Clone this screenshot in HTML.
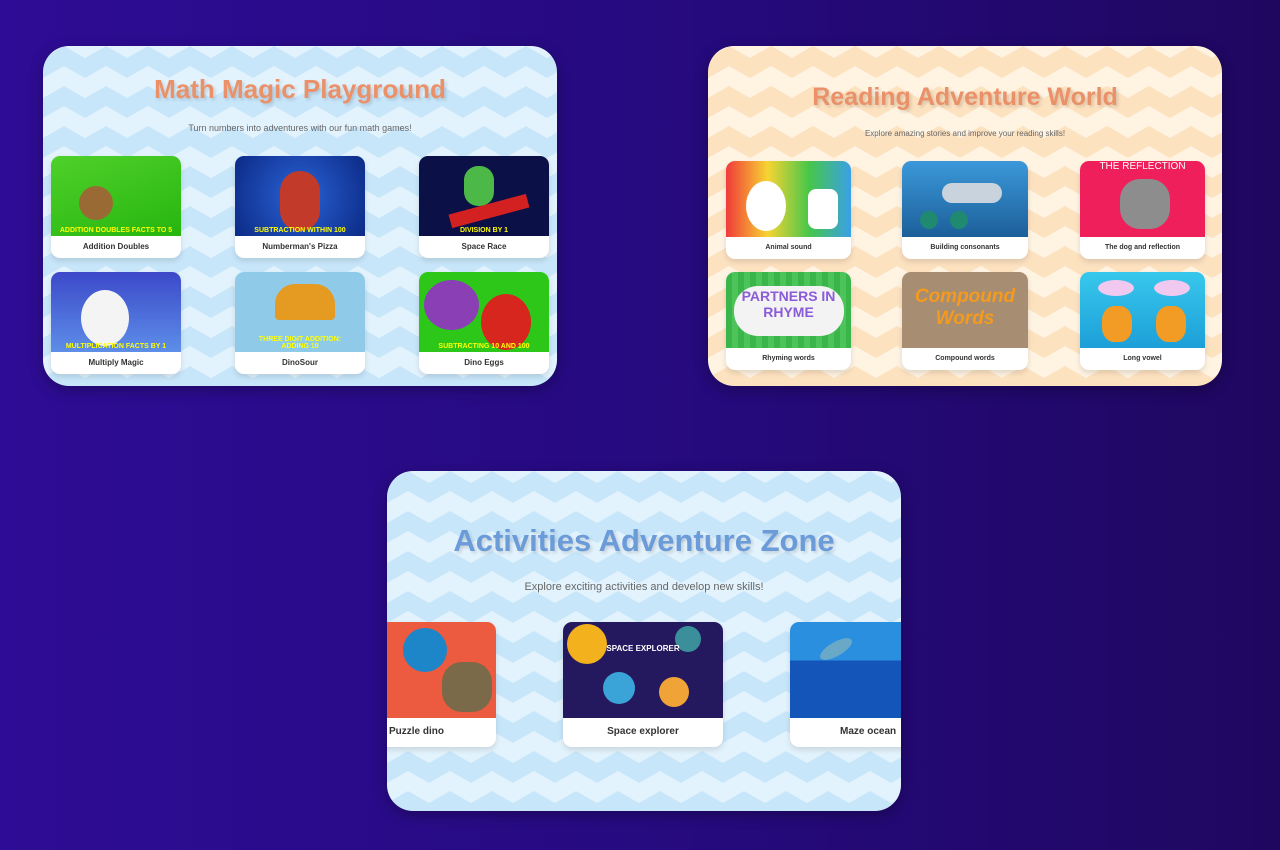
<!DOCTYPE html>
<html><head><meta charset="utf-8"><style>
*{margin:0;padding:0;box-sizing:border-box}
body{width:1280px;height:850px;overflow:hidden;background:linear-gradient(90deg,#2e0c95 0%,#260a80 50%,#1f0760 100%);font-family:"Liberation Sans",sans-serif;position:relative}
.panel{position:absolute;width:514px;height:340px;border-radius:26px;overflow:hidden;box-shadow:0 4px 14px rgba(0,0,0,.3)}
.panel svg.bg{position:absolute;left:0;top:0}
.title{position:absolute;left:0;right:0;text-align:center;font-weight:bold;text-shadow:2px 2px 3px rgba(0,0,0,.15)}
.sub{position:absolute;left:0;right:0;text-align:center;color:#666}
.card{position:absolute;background:#fff;border-radius:9px;overflow:hidden;box-shadow:0 3px 6px rgba(0,0,0,.12)}
.card .img{position:absolute;left:0;top:0;right:0;overflow:hidden}
.card .lab{position:absolute;left:0;right:0;bottom:0;text-align:center;font-weight:bold;color:#333}
</style></head><body>
<svg width="0" height="0" style="position:absolute"><defs>
<pattern id="zb" width="42" height="40" patternUnits="userSpaceOnUse"><rect width="42" height="40" fill="#e3f3fd"/><path d="M0 12 L21 0 L42 12 L42 32 L21 20 L0 32Z" fill="#c8e6fa"/><path d="M0 52 L21 40 L42 52 L42 72 L21 60 L0 72Z" fill="#c8e6fa"/></pattern>
<pattern id="zo" width="42" height="40" patternUnits="userSpaceOnUse"><rect width="42" height="40" fill="#fff3e2"/><path d="M0 12 L21 0 L42 12 L42 32 L21 20 L0 32Z" fill="#fde2c0"/></pattern>
</defs></svg>

<div class="panel" style="left:43px;top:46px">
<svg class="bg" width="514" height="340"><rect width="514" height="340" fill="url(#zb)"/></svg>
<div class="title" style="top:28px;font-size:26px;color:#ea9169">Math Magic Playground</div>
<div class="sub" style="top:77px;font-size:9px">Turn numbers into adventures with our fun math games!</div>
<div class="card" style="left:8px;top:110px;width:130px;height:102px"><div class="img" style="height:80px;background:linear-gradient(160deg,#4fd12a,#27b50f)"><div style="position:absolute;left:28px;top:30px;width:34px;height:34px;border-radius:50%;background:#9a6a35"></div><div style="position:absolute;left:0;right:0;bottom:2px;font-size:7px;color:#ff0;font-weight:bold;text-align:center">ADDITION DOUBLES FACTS TO 5</div></div><div class="lab" style="font-size:8px;line-height:22px">Addition Doubles</div></div>
<div class="card" style="left:192px;top:110px;width:130px;height:102px"><div class="img" style="height:80px;background:radial-gradient(circle at 50% 50%,#2b63d6,#0b2a86)"><div style="position:absolute;left:45px;top:15px;width:40px;height:60px;border-radius:20px;background:#c23a2a"></div><div style="position:absolute;left:0;right:0;bottom:2px;font-size:7px;color:#ff0;font-weight:bold;text-align:center">SUBTRACTION WITHIN 100</div></div><div class="lab" style="font-size:8px;line-height:22px">Numberman's Pizza</div></div>
<div class="card" style="left:376px;top:110px;width:130px;height:102px"><div class="img" style="height:80px;background:#0b1046"><div style="position:absolute;left:45px;top:10px;width:30px;height:40px;border-radius:14px;background:#4cb847"></div><div style="position:absolute;left:30px;top:48px;width:80px;height:14px;background:#d32121;transform:rotate(-15deg)"></div><div style="position:absolute;left:0;right:0;bottom:2px;font-size:7px;color:#ff0;font-weight:bold;text-align:center">DIVISION BY 1</div></div><div class="lab" style="font-size:8px;line-height:22px">Space Race</div></div>
<div class="card" style="left:8px;top:226px;width:130px;height:102px"><div class="img" style="height:80px;background:linear-gradient(180deg,#3c49c9,#5d8ee8)"><div style="position:absolute;left:30px;top:18px;width:48px;height:56px;border-radius:50%;background:#f4f4f4"></div><div style="position:absolute;left:0;right:0;bottom:2px;font-size:7px;color:#ff0;font-weight:bold;text-align:center">MULTIPLICATION FACTS BY 1</div></div><div class="lab" style="font-size:8px;line-height:22px">Multiply Magic</div></div>
<div class="card" style="left:192px;top:226px;width:130px;height:102px"><div class="img" style="height:80px;background:#8fcbe9"><div style="position:absolute;left:40px;top:12px;width:60px;height:36px;background:#e59a22;border-radius:20px 20px 4px 4px"></div><div style="position:absolute;left:0;right:0;bottom:2px;font-size:7px;color:#ff0;font-weight:bold;text-align:center">THREE DIGIT ADDITION:<br>ADDING 10</div></div><div class="lab" style="font-size:8px;line-height:22px">DinoSour</div></div>
<div class="card" style="left:376px;top:226px;width:130px;height:102px"><div class="img" style="height:80px;background:#2dc71a"><div style="position:absolute;left:62px;top:22px;width:50px;height:56px;border-radius:50%;background:#d7261e"></div><div style="position:absolute;left:5px;top:8px;width:55px;height:50px;border-radius:50%;background:#8a3fb5"></div><div style="position:absolute;left:0;right:0;bottom:2px;font-size:7px;color:#ff0;font-weight:bold;text-align:center">SUBTRACTING 10 AND 100</div></div><div class="lab" style="font-size:8px;line-height:22px">Dino Eggs</div></div>
</div>

<div class="panel" style="left:708px;top:46px">
<svg class="bg" width="514" height="340"><rect width="514" height="340" fill="url(#zo)"/></svg>
<div class="title" style="top:37px;font-size:25px;color:#ea9169">Reading Adventure World</div>
<div class="sub" style="top:83px;font-size:8px">Explore amazing stories and improve your reading skills!</div>
<div class="card" style="left:18px;top:115px;width:125px;height:98px"><div class="img" style="height:76px;background:linear-gradient(90deg,#f03a3a,#f7d432,#46c64a,#3aa0e8)"><div style="position:absolute;left:20px;top:20px;width:40px;height:50px;border-radius:50%;background:#fff"></div><div style="position:absolute;left:82px;top:28px;width:30px;height:40px;border-radius:8px;background:#fff"></div></div><div class="lab" style="font-size:7px;line-height:22px">Animal sound</div></div>
<div class="card" style="left:194px;top:115px;width:126px;height:98px"><div class="img" style="height:76px;background:linear-gradient(180deg,#3b98d9,#1c5f9a)"><div style="position:absolute;left:40px;top:22px;width:60px;height:20px;border-radius:10px;background:#c9d3de"></div><div style="position:absolute;left:18px;top:50px;width:18px;height:18px;border-radius:50%;background:#1f8a70"></div><div style="position:absolute;left:48px;top:50px;width:18px;height:18px;border-radius:50%;background:#1f8a70"></div></div><div class="lab" style="font-size:7px;line-height:22px">Building consonants</div></div>
<div class="card" style="left:372px;top:115px;width:125px;height:98px"><div class="img" style="height:76px;background:#ee1f5a"><div style="position:absolute;left:0;right:0;top:0;font-size:10px;color:#fff;text-align:center">THE REFLECTION</div><div style="position:absolute;left:40px;top:18px;width:50px;height:50px;border-radius:40%;background:#8d8d8d"></div></div><div class="lab" style="font-size:7px;line-height:22px">The dog and reflection</div></div>
<div class="card" style="left:18px;top:226px;width:125px;height:98px"><div class="img" style="height:76px;background:repeating-linear-gradient(90deg,#3ab54a 0 6px,#4dc45a 6px 12px)"><div style="position:absolute;left:8px;top:14px;width:110px;height:50px;border-radius:24px;background:#f3f3f3"></div><div style="position:absolute;left:0;right:0;top:16px;font-size:14px;font-weight:bold;color:#8a5cd8;text-align:center;line-height:16px">PARTNERS IN<br>RHYME</div></div><div class="lab" style="font-size:7px;line-height:22px">Rhyming words</div></div>
<div class="card" style="left:194px;top:226px;width:126px;height:98px"><div class="img" style="height:76px;background:#a78d72"><div style="position:absolute;left:0;right:0;top:14px;font-size:19px;font-weight:bold;color:#f39a1f;text-align:center;line-height:22px;font-style:italic">Compound<br>Words</div></div><div class="lab" style="font-size:7px;line-height:22px">Compound words</div></div>
<div class="card" style="left:372px;top:226px;width:125px;height:98px"><div class="img" style="height:76px;background:linear-gradient(180deg,#38c8ec,#1d9fd8)"><div style="position:absolute;left:18px;top:8px;width:36px;height:16px;border-radius:50%;background:#f0c8f0"></div><div style="position:absolute;left:74px;top:8px;width:36px;height:16px;border-radius:50%;background:#f0c8f0"></div><div style="position:absolute;left:22px;top:34px;width:30px;height:36px;border-radius:40%;background:#f29b25"></div><div style="position:absolute;left:76px;top:34px;width:30px;height:36px;border-radius:40%;background:#f29b25"></div></div><div class="lab" style="font-size:7px;line-height:22px">Long vowel</div></div>
</div>

<div class="panel" style="left:387px;top:471px">
<svg class="bg" width="514" height="340"><rect width="514" height="340" fill="url(#zb)"/></svg>
<div class="title" style="top:52px;font-size:31px;color:#6b9bd8">Activities Adventure Zone</div>
<div class="sub" style="top:110px;font-size:11px">Explore exciting activities and develop new skills!</div>
<div class="card" style="left:-50px;top:151px;width:159px;height:125px"><div class="img" style="height:96px;background:#ec5a40"><div style="position:absolute;left:66px;top:6px;width:44px;height:44px;border-radius:50%;background:#1d86c8"></div><div style="position:absolute;left:105px;top:40px;width:50px;height:50px;border-radius:40%;background:#7a6a4a"></div></div><div class="lab" style="font-size:10px;line-height:30px;text-align:left;padding-left:52px">Puzzle dino</div></div>
<div class="card" style="left:176px;top:151px;width:160px;height:125px"><div class="img" style="height:96px;background:#24195e"><div style="position:absolute;left:4px;top:2px;width:40px;height:40px;border-radius:50%;background:#f3b21d"></div><div style="position:absolute;left:40px;top:50px;width:32px;height:32px;border-radius:50%;background:#3aa3d8"></div><div style="position:absolute;left:96px;top:55px;width:30px;height:30px;border-radius:50%;background:#f0a337"></div><div style="position:absolute;left:112px;top:4px;width:26px;height:26px;border-radius:50%;background:#3a8f9a"></div><div style="position:absolute;left:0;right:0;top:22px;font-size:8px;color:#fff;text-align:center;font-weight:bold">SPACE EXPLORER</div></div><div class="lab" style="font-size:10px;line-height:30px">Space explorer</div></div>
<div class="card" style="left:403px;top:151px;width:160px;height:125px"><div class="img" style="height:96px;background:linear-gradient(180deg,#2b8fe0 0 40%,#1355b8 40%)"><div style="position:absolute;left:28px;top:20px;width:36px;height:14px;border-radius:50%;background:#6aa8c8;transform:rotate(-30deg)"></div></div><div class="lab" style="font-size:10px;line-height:30px;text-align:left;padding-left:50px">Maze ocean</div></div>
</div>
</body></html>
